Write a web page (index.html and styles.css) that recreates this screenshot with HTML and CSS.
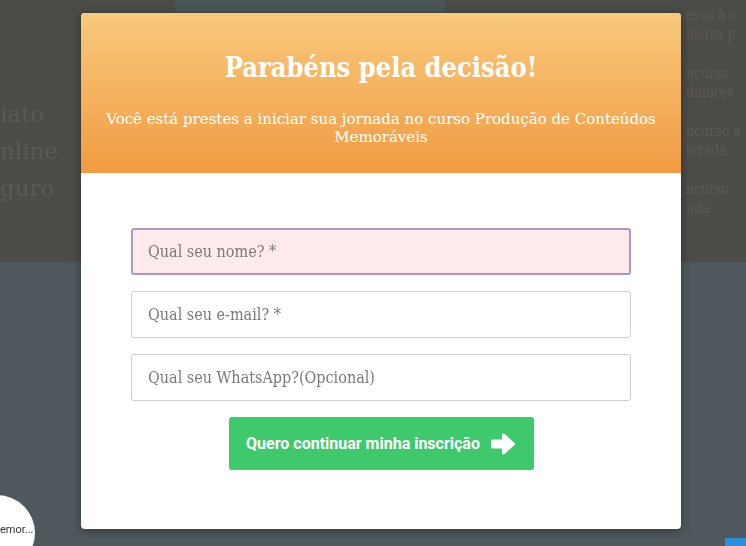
FILE: index.html
```html
<!DOCTYPE html>
<html lang="pt-BR">

<head>
  <meta charset="UTF-8" />
  <meta name="viewport" content="width=device-width, initial-scale=1.0" />
  <title>Produção de Conteúdos Memoráveis</title>
  <link rel="stylesheet" href="styles.css">
</head>

<body>
  <div class="page">
    <section class="hero">
      <div class="hero-image"></div>
      <div class="hero-left">
        <p>iato</p>
        <p>nline</p>
        <p>guro</p>
      </div>
      <div class="hero-right">
        <p>esso à c<br>lusiva p</p>
        <p>ncurso<br>duiores</p>
        <p>ncurso a<br>lerada.</p>
        <p>ncurso<br>nda</p>
      </div>
    </section>
    <section class="below"></section>
  </div>

  <div class="chat-bubble"><span>emor...</span></div>
  <div class="corner-tab"></div>

  <div class="modal">
    <div class="modal-content">
      <div class="modal-header">
        <h2>Parabéns pela decisão!</h2>
        <p>Você está prestes a iniciar sua jornada no curso Produção de Conteúdos Memoráveis</p>
      </div>
      <form class="modal-form" onsubmit="return false">
        <input type="text" class="focused" placeholder="Qual seu nome? *" />
        <input type="email" placeholder="Qual seu e-mail? *" />
        <input type="tel" placeholder="Qual seu WhatsApp?(Opcional)" />
        <button type="submit">
          Quero continuar minha inscrição
          <svg width="26" height="26" viewBox="0 0 26 26">
            <path d="M2.5 10h11V4l10 9-10 9v-6h-11z" fill="#fff" stroke="#fff" stroke-width="3" stroke-linejoin="round" />
          </svg>
        </button>
      </form>
    </div>
  </div>
</body>

</html>
```

FILE: styles.css
```css
body {
  margin: 0;
  font-family: "DejaVu Serif", serif;
  overflow: hidden;
  height: 546px;
  background: #4f585c;
}

.page {
  height: 546px;
  display: flex;
  flex-direction: column;
}

.hero {
  height: 262px;
  background: #4b4b47;
  display: flex;
  justify-content: space-between;
  position: relative;
}

.hero-image {
  position: absolute;
  left: 175px;
  top: 0;
  width: 270px;
  height: 12px;
  background: #4a5558;
}

.hero-left {
  padding-top: 101px;
  font-size: 23px;
  color: #5a5b55;
}

.hero-left p {
  margin: 0 0 10px;
  line-height: 27px;
}

.hero-right {
  width: 66px;
  overflow: hidden;
  padding-top: 6px;
  font-size: 14px;
  color: #5a5b56;
  font-stretch: condensed;
  white-space: nowrap;
}

.hero-right p {
  margin: 0 0 20px;
  line-height: 19px;
  padding-left: 6px;
}

.below {
  flex: 1;
  background: #4f585c;
}

.chat-bubble {
  position: fixed;
  left: -41px;
  top: 495px;
  width: 76px;
  height: 76px;
  border-radius: 50%;
  background: #fff;
  font-family: "Roboto", sans-serif;
  font-size: 11px;
  color: #333;
}

.chat-bubble span {
  position: absolute;
  left: 41px;
  top: 28px;
}

.corner-tab {
  position: fixed;
  right: 0;
  bottom: 0;
  width: 21px;
  height: 8px;
  background: #2b8fdb;
}

.modal {
  position: fixed;
  left: 0;
  top: 0;
  width: 100%;
  height: 100%;
}

.modal-content {
  position: absolute;
  left: 81px;
  top: 13px;
  width: 600px;
  background: #fff;
  border-radius: 4px;
  overflow: hidden;
  box-shadow: 0 2px 10px rgba(0, 0, 0, 0.35);
}

.modal-header {
  height: 160px;
  box-sizing: border-box;
  padding: 38px 20px 0;
  background: linear-gradient(to bottom, #f8c97c, #f19b43);
  color: #fff;
  text-align: center;
}

.modal-header h2 {
  margin: 0 0 25px;
  font-size: 27px;
  line-height: 34px;
  font-weight: bold;
  font-stretch: condensed;
}

.modal-header p {
  margin: 0;
  font-size: 15px;
  line-height: 18px;
}

.modal-form {
  display: flex;
  flex-direction: column;
  align-items: center;
  gap: 16px;
  padding: 55px 0 59px;
}

.modal-form input {
  width: 500px;
  height: 47px;
  box-sizing: border-box;
  padding: 0 16px;
  border: 1px solid #cfcfcf;
  border-radius: 3px;
  font-family: "DejaVu Serif", serif;
  font-stretch: condensed;
  font-size: 16px;
  color: #555;
  background: #fff;
  outline: none;
}

.modal-form input::placeholder {
  color: #7a7a7a;
}

.modal-form input.focused {
  background: #ffeaeb;
  border: 2px solid #a898c8;
  padding-left: 15px;
}

.modal-form button {
  width: 305px;
  height: 53px;
  margin-top: 0;
  border: none;
  border-radius: 3px;
  background: #3fc96c;
  color: #fff;
  font-family: "Roboto", sans-serif;
  font-weight: bold;
  font-size: 16px;
  display: flex;
  align-items: center;
  justify-content: center;
  gap: 10px;
  cursor: pointer;
}
```
